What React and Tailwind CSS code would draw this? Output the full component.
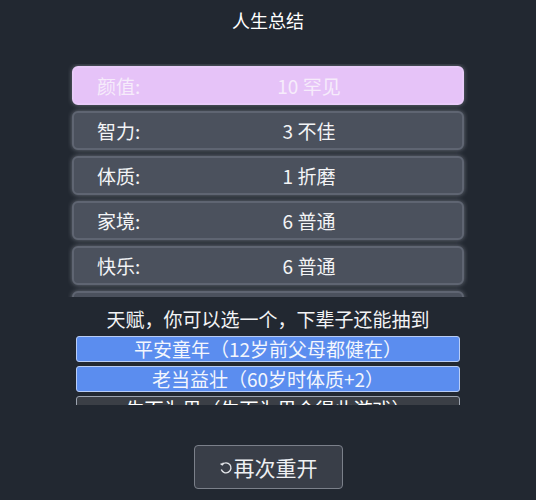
import React from 'react';

const props = [
  { label: '颜值', value: '10 罕见', rare: true },
  { label: '智力', value: '3 不佳' },
  { label: '体质', value: '1 折磨' },
  { label: '家境', value: '6 普通' },
  { label: '快乐', value: '6 普通' },
  { label: '', value: '' }, // next row, scrolled out of view
];

const talents = [
  { name: '平安童年（12岁前父母都健在）', picked: true },
  { name: '老当益壮（60岁时体质+2）', picked: true },
  { name: '生而为男（生而为男会得此游戏）', picked: false },
];

export default function App() {
  return (
    <div
      className="w-[536px] h-[500px] bg-[#222831] text-white flex flex-col items-center overflow-hidden"
      style={{ fontFamily: '"Noto Sans CJK SC", "Noto Sans", sans-serif' }}
    >
      <h1 className="mt-[7px] text-[18px] leading-[26px]">人生总结</h1>

      {/* properties */}
      <div className="mt-[31px] w-[400px] h-[233px] overflow-hidden px-[4px] pt-[2px]">
        <ul className="flex flex-col gap-[6px]">
          {props.map((p, i) => (
            <li
              key={i}
              className={`h-[39px] rounded-[6px] border-2 flex items-center text-[19px] leading-[24px] shadow-[0_0_5px_rgba(200,205,215,0.45)] ${
                p.rare
                  ? 'bg-[#e6c3f8] border-[#e9cbf9] text-[#f6ecfb]'
                  : 'bg-[#4b515d] border-[#5f6572] text-[#f3f4f6]'
              }`}
            >
              {p.label && <span className="w-[98px] pl-[23px]">{p.label}:</span>}
              {p.value && <span className="flex-1 text-center pr-[16px]">{p.value}</span>}
            </li>
          ))}
        </ul>
      </div>

      {/* talents */}
      <p className="mt-[9px] text-[19px] leading-[26px] text-[#f3f4f6]">天赋，你可以选一个，下辈子还能抽到</p>
      <div className="mt-[4px] w-[384px] h-[69px] overflow-hidden">
        <ul className="flex flex-col gap-[4px]">
          {talents.map((t) => (
            <li
              key={t.name}
              className={`h-[26px] rounded-[3px] border flex items-center justify-center text-[19px] leading-[24px] ${
                t.picked
                  ? 'bg-[#5b8def] border-[#b9cdf5] text-[#f3f6fd]'
                  : 'bg-[#3b3f46] border-[#9ca3af] text-white'
              }`}
            >
              {t.name}
            </li>
          ))}
        </ul>
      </div>

      <button className="mt-[40px] w-[149px] h-[44px] rounded-[4px] border border-[#7b808a] bg-[#393e48] flex items-center justify-center text-[21px] leading-[28px] text-[#eef0f3]">
        <svg width="14" height="14" viewBox="0 0 14 14" className="mr-[1px] mt-[2px]" fill="none" stroke="#e5e7eb" strokeWidth="1.4">
          <path d="M3.2 3.6 A5 5 0 1 1 2.3 8.6" />
          <path d="M1.6 2.6 L3.4 3.8 L4.4 1.8" strokeLinejoin="round" />
        </svg>
        再次重开
      </button>
    </div>
  );
}
